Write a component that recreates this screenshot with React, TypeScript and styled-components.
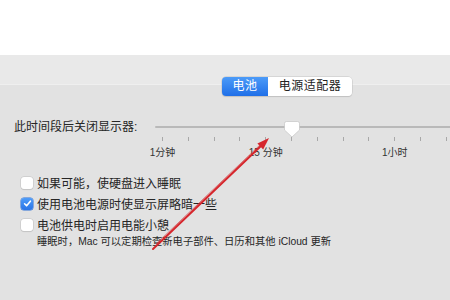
import React from "react";
import styled, { createGlobalStyle } from "styled-components";

const GlobalStyle = createGlobalStyle`
  html, body { margin: 0; padding: 0; }
  body {
    width: 450px;
    height: 300px;
    overflow: hidden;
    background: #e2e2e2;
    font-family: "Liberation Sans", "Noto Sans CJK SC", sans-serif;
    color: #262626;
  }
`;

const Page = styled.div`
  position: relative;
  width: 450px;
  height: 300px;
  display: flex;
  flex-direction: column;
  overflow: hidden;
`;

const TopBar = styled.div`
  height: 55px;
  background: #ffffff;
  flex: none;
`;

const Panel = styled.div`
  flex: 1;
  display: flex;
  flex-direction: column;
  background: linear-gradient(
    to bottom,
    #e9e9e9 0px,
    #e9e9e9 29px,
    #efefef 29px,
    #efefef 30px,
    #e2e2e2 30px,
    #e2e2e2 100%
  );
`;

const SegmentRow = styled.div`
  display: flex;
  padding: 22px 0 0 222px;
`;

const Segmented = styled.div`
  display: flex;
  height: 19px;
  border-radius: 4px;
  box-shadow: 0 0 0 0.5px #c4c4c4, 0 1px 1px rgba(0, 0, 0, 0.15);
  overflow: hidden;
`;

const Segment = styled.div<{ $active?: boolean; $w: number }>`
  width: ${(p) => p.$w}px;
  display: flex;
  align-items: center;
  justify-content: center;
  font-size: 12px;
  line-height: 19px;
  letter-spacing: 0.5px;
  color: ${(p) => (p.$active ? "#ffffff" : "#222222")};
  background: ${(p) =>
    p.$active ? "linear-gradient(to bottom, #4c9bf8, #1f6fe8)" : "#ffffff"};
`;

const SliderRow = styled.div`
  display: flex;
  align-items: flex-start;
  margin-top: 21px;
`;

const SliderLabel = styled.div`
  width: 141px;
  padding-left: 14px;
  font-size: 12px;
  line-height: 20px;
  color: #262626;
  flex: none;
`;

const SliderArea = styled.div`
  position: relative;
  flex: 1;
  padding-top: 9px;
`;

const Track = styled.div`
  height: 2px;
  border-radius: 1px;
  background: #b9b9b9;
  margin-right: -10px;
`;

const Ticks = styled.div`
  display: flex;
  padding-left: 7px;
  margin-top: 9px;
  height: 4px;
`;

const TickCell = styled.div`
  flex: none;
  width: 25.8px;
  position: relative;
  &::before {
    content: "";
    position: absolute;
    left: 0;
    top: 0;
    width: 1px;
    height: 4px;
    background: #a8a8a8;
  }
`;

const TickLabels = styled.div`
  position: relative;
  height: 12px;
  margin-top: 6px;
  margin-left: 7px;
`;

const TickLabel = styled.span`
  position: absolute;
  top: 0;
  transform: translateX(-50%);
  white-space: nowrap;
  font-size: 10px;
  line-height: 12px;
  color: #333333;
`;

const Thumb = styled.svg`
  position: absolute;
  top: 4px;
  width: 16px;
  height: 17px;
  transform: translateX(-50%);
  overflow: visible;
`;

const Options = styled.div`
  display: flex;
  flex-direction: column;
  padding-left: 21px;
  margin-top: 13px;
`;

const OptionRow = styled.label`
  display: flex;
  align-items: center;
  gap: 4px;
  height: 21px;
  font-size: 12px;
  color: #262626;
`;

const Box = styled.span<{ $checked?: boolean }>`
  width: 12px;
  height: 12px;
  flex: none;
  box-sizing: border-box;
  border-radius: 3px;
  display: flex;
  align-items: center;
  justify-content: center;
  background: ${(p) =>
    p.$checked ? "linear-gradient(to bottom, #4e9cf8, #2a74e6)" : "#ffffff"};
  box-shadow: ${(p) =>
    p.$checked
      ? "0 0 0 0.5px #2a6fd6"
      : "0 0 0 0.5px #c2c2c2, 0 0.5px 1px rgba(0,0,0,0.12)"};
`;

const SubText = styled.div`
  padding-left: 16px;
  margin-top: 0;
  font-size: 10.3px;
  line-height: 14px;
  color: #262626;
`;

const Annotation = styled.svg`
  position: absolute;
  left: 0;
  top: 0;
  width: 450px;
  height: 300px;
  pointer-events: none;
`;

const STEP = 25.8;
const TICK_COUNT = 12;
const labels = [
  { i: 0, t: "1分钟" },
  { i: 4, t: "15 分钟" },
  { i: 9, t: "1小时" },
];
const value = 5;

const Check = () => (
  <svg width="9" height="9" viewBox="0 0 9 9">
    <path
      d="M1.6 4.8 L3.6 6.8 L7.4 2.2"
      fill="none"
      stroke="#ffffff"
      strokeWidth="1.6"
      strokeLinecap="round"
      strokeLinejoin="round"
    />
  </svg>
);

export default function App() {
  return (
    <>
      <GlobalStyle />
      <Page>
        <TopBar />
        <Panel>
          <SegmentRow>
            <Segmented>
              <Segment $active $w={46}>电池</Segment>
              <Segment $w={84}>电源适配器</Segment>
            </Segmented>
          </SegmentRow>
          <SliderRow>
            <SliderLabel>此时间段后关闭显示器:</SliderLabel>
            <SliderArea>
              <Track />
              <Thumb
                viewBox="0 0 16 17"
                style={{ left: 7 + value * STEP + 0.5 }}
              >
                <path
                  d="M2.5 0.5 H13.5 A2 2 0 0 1 15.5 2.5 V9 L8 16 L0.5 9 V2.5 A2 2 0 0 1 2.5 0.5 Z"
                  fill="#ffffff"
                  stroke="#bdbdbd"
                  strokeWidth="0.6"
                />
              </Thumb>
              <Ticks>
                {Array.from({ length: TICK_COUNT }).map((_, i) => (
                  <TickCell key={i} />
                ))}
              </Ticks>
              <TickLabels>
                {labels.map((l) => (
                  <TickLabel key={l.i} style={{ left: l.i * STEP + 0.5 }}>
                    {l.t}
                  </TickLabel>
                ))}
              </TickLabels>
            </SliderArea>
          </SliderRow>
          <Options>
            <OptionRow>
              <Box />
              如果可能，使硬盘进入睡眠
            </OptionRow>
            <OptionRow>
              <Box $checked>
                <Check />
              </Box>
              使用电池电源时使显示屏略暗一些
            </OptionRow>
            <OptionRow>
              <Box />
              电池供电时启用电能小憩
            </OptionRow>
            <SubText>
              睡眠时，Mac 可以定期检查新电子部件、日历和其他 iCloud 更新
            </SubText>
          </Options>
        </Panel>
        <Annotation viewBox="0 0 450 300">
          <line
            x1="153"
            y1="249"
            x2="263"
            y2="144"
            stroke="#d6262c"
            strokeWidth="2"
            strokeLinecap="round"
          />
          <line
            x1="156"
            y1="244"
            x2="262"
            y2="143"
            stroke="#d6262c"
            strokeWidth="1"
            opacity="0.6"
          />
          <polygon
            points="269,138 263.2,149.4 257.4,143.4"
            fill="#d6262c"
          />
        </Annotation>
      </Page>
    </>
  );
}
